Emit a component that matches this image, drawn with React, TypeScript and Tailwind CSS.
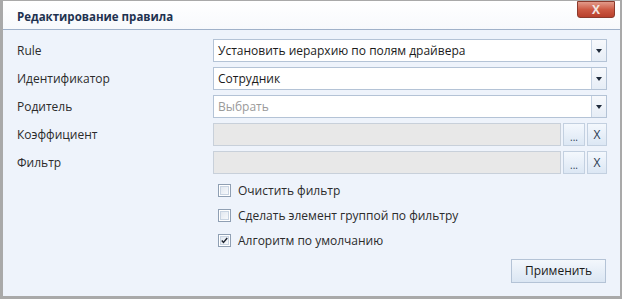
import React from 'react'

const font = { fontFamily: '"Open Sans", "Noto Sans", sans-serif' }

function Arrow() {
  return (
    <div className="flex w-[15px] h-full items-center justify-center border-l border-[#c5d2e2] bg-gradient-to-b from-[#f7f9fc] to-[#e6edf6]">
      <svg width="6" height="4" viewBox="0 0 6 4">
        <path d="M0 0h6L3 4z" fill="#1e2a3a" />
      </svg>
    </div>
  )
}

function Select({ value, placeholder }: { value?: string; placeholder?: string }) {
  return (
    <div className="flex h-[23px] border border-[#b4c3d6] bg-white">
      <div className={`flex-1 flex items-center pl-[4px] text-[12px] ${value ? 'text-[#1b1b1b]' : 'text-[#9a9a9a]'}`}>
        {value ?? placeholder}
      </div>
      <Arrow />
    </div>
  )
}

function SmallBtn({ children, w }: { children: React.ReactNode; w: string }) {
  return (
    <div className={`flex ${w} h-full items-center justify-center border border-[#c3d0e0] bg-gradient-to-b from-[#f4f8fd] to-[#dce7f4] text-[12px] text-[#2a3a50]`}>
      {children}
    </div>
  )
}

function Picker() {
  return (
    <div className="flex h-[23px] gap-[2px]">
      <div className="flex-1 border border-[#c8d0da] bg-[#e8e8e8]" />
      <SmallBtn w="w-[22px]">
        <span className="pt-[5px] text-[10px] leading-none">...</span>
      </SmallBtn>
      <SmallBtn w="w-[20px]">X</SmallBtn>
    </div>
  )
}

function Check({ label, checked }: { label: string; checked?: boolean }) {
  return (
    <div className="flex items-center h-[25px] gap-[7px]">
      <div className="w-[13px] h-[13px] border border-[#8f9fb3] bg-white p-[1px]">
        <div className="w-full h-full border border-[#c9d4e2] bg-gradient-to-br from-[#e2e8f0] to-[#f7f9fc] flex items-center justify-center">
          {checked && (
            <svg width="9" height="9" viewBox="0 0 9 9">
              <path d="M1 4.5l2.2 2.5L8 1.2" stroke="#1e2430" strokeWidth="1.8" fill="none" />
            </svg>
          )}
        </div>
      </div>
      <span className="text-[12px] text-[#2b2b2b]">{label}</span>
    </div>
  )
}

export default function App() {
  return (
    <div className="w-[626px] h-[303px] bg-white" style={font}>
      <div className="w-[622px] h-[299px] flex flex-col border-l-[3px] border-t border-r-2 border-b-[3px] border-[#a9a9a9] bg-[#eef3fb]">
        <div className="flex h-[29px] shrink-0 items-start justify-between border-b border-[#9fb1c9] bg-gradient-to-b from-white to-[#f7f9fc]">
          <span className="pl-[14px] pt-[7px] text-[11.5px] font-bold text-[#1e3250]">Редактирование правила</span>
          <div className="mr-[5px] flex w-[38px] h-[17px] items-center justify-center rounded-b-[3px] border border-[#8b3a2c] bg-gradient-to-b from-[#e29a8a] via-[#cc5a44] to-[#b8402c] text-[12px] font-bold text-[#f2e6e2]">
            X
          </div>
        </div>

        <div className="grid grid-cols-[196px_1fr] items-center gap-y-[5px] pl-[14px] pr-[13px] pt-[9px] text-[12px] text-[#2b2b2b]">
          <span>Rule</span>
          <Select value="Установить иерархию по полям драйвера" />
          <span>Идентификатор</span>
          <Select value="Сотрудник" />
          <span>Родитель</span>
          <Select placeholder="Выбрать" />
          <span>Коэффициент</span>
          <Picker />
          <span>Фильтр</span>
          <Picker />
        </div>

        <div className="flex flex-col pl-[215px] pt-[4px]">
          <Check label="Очистить фильтр" />
          <Check label="Сделать элемент группой по фильтру" />
          <Check label="Алгоритм по умолчанию" checked />
        </div>

        <div className="flex justify-end pr-[14px] pt-[6px]">
          <div className="flex w-[95px] h-[24px] items-center justify-center border border-[#b4c3d6] bg-gradient-to-b from-[#f3f7fc] to-[#dbe6f3] text-[12px] text-[#1b1b1b]">
            Применить
          </div>
        </div>
      </div>
    </div>
  )
}
